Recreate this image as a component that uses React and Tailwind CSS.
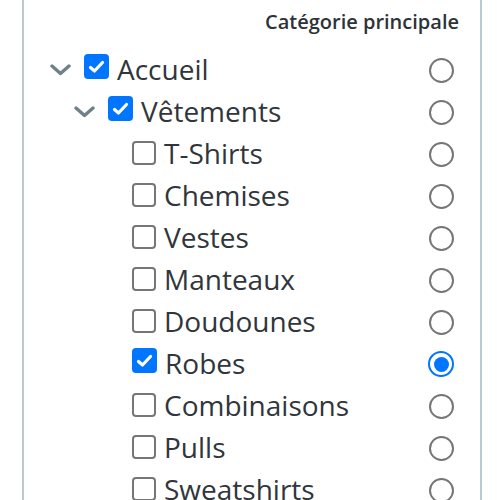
import React from "react";

const items = [
  { label: "Accueil", level: 0, chevron: true, checked: true },
  { label: "Vêtements", level: 1, chevron: true, checked: true },
  { label: "T-Shirts", level: 2 },
  { label: "Chemises", level: 2 },
  { label: "Vestes", level: 2 },
  { label: "Manteaux", level: 2 },
  { label: "Doudounes", level: 2 },
  { label: "Robes", level: 2, checked: true, main: true },
  { label: "Combinaisons", level: 2 },
  { label: "Pulls", level: 2 },
  { label: "Sweatshirts", level: 2 },
];

function Chevron() {
  return (
    <svg width="21" height="12" viewBox="0 0 21 12" className="mt-[16px]">
      <path d="M2 2 L10.5 9.5 L19 2" fill="none" stroke="#6e8189" strokeWidth="3.4" strokeLinecap="round" strokeLinejoin="round" />
    </svg>
  );
}

function Checkbox({ checked }) {
  if (checked) {
    return (
      <div className="mt-[6px] w-[25px] h-[25px] rounded-[4px] bg-[#0075ff] flex items-center justify-center shrink-0">
        <svg width="17" height="14" viewBox="0 0 17 14">
          <path d="M2.5 7.5 L6.5 11 L14.5 2.5" fill="none" stroke="#fff" strokeWidth="3.2" strokeLinecap="round" strokeLinejoin="round" />
        </svg>
      </div>
    );
  }
  return <div className="mt-[9px] w-[24px] h-[24px] rounded-[4px] border-2 border-[#767676] bg-white shrink-0" />;
}

function Radio({ checked }) {
  if (checked) {
    return (
      <div className="mt-[9px] w-[26px] h-[26px] rounded-full border-2 border-[#0075ff] flex items-center justify-center shrink-0">
        <div className="w-[15px] h-[15px] rounded-full bg-[#0075ff]" />
      </div>
    );
  }
  return <div className="mt-[10px] w-[25px] h-[25px] rounded-full border-2 border-[#767676] shrink-0" />;
}

export default function App() {
  return (
    <div className="w-[502px] h-[500px] overflow-hidden bg-white" style={{ fontFamily: '"Open Sans", sans-serif' }}>
      <div className="ml-[22px] w-[460px] h-[500px] border-x-2 border-[#b8c9d1]">
        <div className="pt-[7px] pr-[21px] text-right text-[20px] leading-[30px] font-semibold text-[#2d3338]">
          Catégorie principale
        </div>
        <div className="mt-[11px]">
          {items.map((it) => (
            <div key={it.label} className="h-[42px] flex items-start pr-[26px]" style={{ paddingLeft: 26 + it.level * 24 }}>
              <div className="w-[34px] shrink-0">{it.chevron && <Chevron />}</div>
              <Checkbox checked={it.checked} />
              <div className="ml-[8px] flex-1 text-[28px] leading-[42px] text-[#30363b]">{it.label}</div>
              <Radio checked={it.main} />
            </div>
          ))}
        </div>
      </div>
    </div>
  );
}
